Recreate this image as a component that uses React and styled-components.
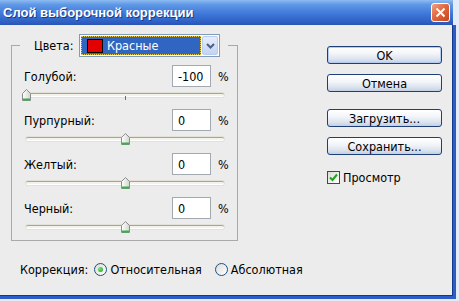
import React from "react"
import styled, { createGlobalStyle } from "styled-components"

const GlobalStyle = createGlobalStyle`
  html, body {
    margin: 0;
    padding: 0;
    background: #e3ebf7;
  }

  body {
    font-family: "DejaVu Sans Condensed", "Liberation Sans", sans-serif;
    font-stretch: condensed;
    font-size: 12.5px;
    color: #000;
  }
`

const Window = styled.div`
  width: 456px;
  height: 299px;
  display: flex;
  flex-direction: column;
  overflow: hidden;
`

const TitleBar = styled.div`
  flex: none;
  height: 25px;
  margin-right: 3px;
  padding: 0 3px;
  display: flex;
  align-items: center;
  justify-content: space-between;
  background: linear-gradient(
    #8fbcf2 0%,
    #5f99e6 18%,
    #3f78d8 55%,
    #2f62c6 85%,
    #2a55b4 100%
  );
`

const Title = styled.span`
  font-family: "Liberation Sans", Arial, sans-serif;
  font-stretch: normal;
  font-weight: bold;
  font-size: 13px;
  color: #fff;
  text-shadow: 1px 1px 0 #173a8c;
`

const CloseButton = styled.div`
  width: 19px;
  height: 19px;
  box-sizing: border-box;
  border: 1px solid #fff;
  border-radius: 3px;
  background: linear-gradient(135deg, #f0a284 0%, #e2683f 45%, #c9441d 100%);
  display: flex;
  align-items: center;
  justify-content: center;
`

const Client = styled.div`
  flex: 1;
  display: flex;
  background: #ececec;
  border-right: 3px solid #2c5cc4;
  border-bottom: 3px solid #2c5cc4;
  box-shadow: inset -1px -1px 0 #15388f;
`

const LeftColumn = styled.div`
  width: 227px;
  padding: 9px 0 0 11px;
`

const GroupBox = styled.fieldset`
  margin: 0;
  padding: 0 0 5px 0;
  min-width: 0;
  width: 227px;
  box-sizing: border-box;
  border: 1px solid #a9a9a9;
`

const Legend = styled.legend`
  margin-left: 8px;
  padding: 0 8px 0 14px;
`

const LegendInner = styled.div`
  display: flex;
  align-items: center;
`

const LegendLabel = styled.span`
  width: 45px;
`

const Select = styled.div`
  width: 141px;
  height: 23px;
  box-sizing: border-box;
  border: 1px solid #7f9db9;
  background: #fff;
  padding: 1px;
  display: flex;
`

const Selected = styled.div`
  flex: 1;
  display: flex;
  align-items: center;
  background: #3165c2;
  outline: 1px dotted #e8c64a;
  outline-offset: -1px;
  color: #fff;
`

const Swatch = styled.span`
  width: 16px;
  height: 14px;
  box-sizing: border-box;
  margin: 0 4px 0 6px;
  background: ${(p) => p.$color};
  border: 1px solid #000;
`

const ArrowButton = styled.div`
  width: 16px;
  margin-left: 1px;
  border-radius: 2px;
  background: linear-gradient(#e6eefc, #c3d3f3);
  border: 1px solid #b9cbee;
  box-sizing: border-box;
  display: flex;
  align-items: center;
  justify-content: center;
`

const ChannelList = styled.div`
  margin-top: 8px;
  display: flex;
  flex-direction: column;
  gap: 6px;
`

const Row = styled.div`
  height: 22px;
  padding-left: 12px;
  display: flex;
  align-items: center;
`

const Label = styled.span`
  width: 148px;
`

const NumberBox = styled.div`
  width: 39px;
  height: 22px;
  box-sizing: border-box;
  border: 1px solid #a2a9b1;
  background: #fff;
  padding-left: 5px;
  display: flex;
  align-items: center;
`

const Percent = styled.span`
  margin-left: 7px;
`

const Slider = styled.div`
  position: relative;
  margin-left: 14px;
  width: 198px;
  height: 16px;
  padding-top: 6px;
  box-sizing: border-box;
`

const Track = styled.div`
  height: 4px;
  box-sizing: border-box;
  border-radius: 2px;
  background: #f4f3ea;
  border-top: 1px solid #a3a3a3;
  border-bottom: 1px solid #fff;
  box-shadow: 0 0 0 1px #e2e2da;
`

const Tick = styled.div`
  position: absolute;
  left: 99px;
  top: 9px;
  width: 1px;
  height: 4px;
  background: #6d6d6d;
`

const Thumb = styled.svg`
  position: absolute;
  top: 2px;
`

const CorrectionRow = styled.div`
  margin-top: 20px;
  padding-left: 9px;
  height: 16px;
  display: flex;
  align-items: center;
  white-space: nowrap;
`

const CorrectionLabel = styled.span`
  margin-right: 6px;
`

const Option = styled.span`
  display: flex;
  align-items: center;
  gap: 3px;
  margin-right: ${(p) => p.$gap || 0}px;
`

const Radio = styled.span`
  width: 13px;
  height: 13px;
  box-sizing: border-box;
  border-radius: 50%;
  border: 1px solid #1c5180;
  background: linear-gradient(135deg, #dcdcd6, #ffffff);
  display: flex;
  align-items: center;
  justify-content: center;

  &::after {
    content: "";
    display: ${(p) => (p.$checked ? "block" : "none")};
    width: 5px;
    height: 5px;
    border-radius: 50%;
    background: radial-gradient(circle at 35% 35%, #7fe07f, #1f9b1f);
  }
`

const RightColumn = styled.div`
  margin-left: 89px;
  padding-top: 21px;
  display: flex;
  flex-direction: column;
`

const ButtonGroup = styled.div`
  display: flex;
  flex-direction: column;
  gap: 10px;
  margin-top: ${(p) => p.$top || 0}px;
`

const Button = styled.div`
  width: 115px;
  height: 18px;
  box-sizing: border-box;
  border: 1px solid #1e3f78;
  border-radius: 3px;
  background: linear-gradient(#ffffff 0%, #f3f5f9 40%, #dde4ef 75%, #c3cfe2 100%);
  box-shadow: ${(p) => (p.$default ? "inset 0 0 0 1px #b5cbef" : "none")};
  display: flex;
  align-items: center;
  justify-content: center;
`

const CheckRow = styled.div`
  margin-top: 15px;
  display: flex;
  align-items: center;
  gap: 3px;
`

const CheckBox = styled.span`
  width: 13px;
  height: 13px;
  box-sizing: border-box;
  border: 1px solid #1c5180;
  background: linear-gradient(135deg, #dcdcd6, #ffffff);
  display: flex;
  align-items: center;
  justify-content: center;
`

const channels = [
  { name: "Голубой:", value: -100 },
  { name: "Пурпурный:", value: 0 },
  { name: "Желтый:", value: 0 },
  { name: "Черный:", value: 0 },
]

function SliderThumb({ value }) {
  const center = ((value + 100) / 200) * 198
  return (
    <Thumb width="10" height="12" viewBox="0 0 10 12" style={{ left: center - 4.5 }}>
      <defs>
        <linearGradient id="thumbFill" x1="0" y1="0" x2="1" y2="0">
          <stop offset="0" stopColor="#ffffff" />
          <stop offset="1" stopColor="#d4d4d0" />
        </linearGradient>
      </defs>
      <path d="M0.5 4.5 L4.5 0.5 L8.5 4.5 V11.5 H0.5 Z" fill="url(#thumbFill)" stroke="#8c8c8c" />
      <rect x="1" y="9.5" width="7" height="2" fill="#35b04a" />
    </Thumb>
  )
}

export default function App() {
  return (
    <>
      <GlobalStyle />
      <Window>
        <TitleBar>
          <Title>Слой выборочной коррекции</Title>
          <CloseButton>
            <svg width="11" height="11" viewBox="0 0 11 11">
              <path d="M1.5 1.5 L9.5 9.5 M9.5 1.5 L1.5 9.5" stroke="#fff" strokeWidth="2" />
            </svg>
          </CloseButton>
        </TitleBar>
        <Client>
          <LeftColumn>
            <GroupBox>
              <Legend>
                <LegendInner>
                  <LegendLabel>Цвета:</LegendLabel>
                  <Select>
                    <Selected>
                      <Swatch $color="#e30000" />
                      Красные
                    </Selected>
                    <ArrowButton>
                      <svg width="9" height="6" viewBox="0 0 9 6">
                        <path d="M1 1 L4.5 4.5 L8 1" fill="none" stroke="#4d5f86" strokeWidth="2" />
                      </svg>
                    </ArrowButton>
                  </Select>
                </LegendInner>
              </Legend>
              <ChannelList>
                {channels.map((c) => (
                  <div key={c.name}>
                    <Row>
                      <Label>{c.name}</Label>
                      <NumberBox>{c.value}</NumberBox>
                      <Percent>%</Percent>
                    </Row>
                    <Slider>
                      <Track />
                      <Tick />
                      <SliderThumb value={c.value} />
                    </Slider>
                  </div>
                ))}
              </ChannelList>
            </GroupBox>
            <CorrectionRow>
              <CorrectionLabel>Коррекция:</CorrectionLabel>
              <Option $gap={13}>
                <Radio $checked />
                Относительная
              </Option>
              <Option>
                <Radio />
                Абсолютная
              </Option>
            </CorrectionRow>
          </LeftColumn>
          <RightColumn>
            <ButtonGroup>
              <Button $default>OK</Button>
              <Button>Отмена</Button>
            </ButtonGroup>
            <ButtonGroup $top={17}>
              <Button>Загрузить...</Button>
              <Button>Сохранить...</Button>
            </ButtonGroup>
            <CheckRow>
              <CheckBox>
                <svg width="9" height="9" viewBox="0 0 9 9">
                  <path d="M1 4.5 L3.5 7 L8 1.5" fill="none" stroke="#21a121" strokeWidth="2" />
                </svg>
              </CheckBox>
              Просмотр
            </CheckRow>
          </RightColumn>
        </Client>
      </Window>
    </>
  )
}
